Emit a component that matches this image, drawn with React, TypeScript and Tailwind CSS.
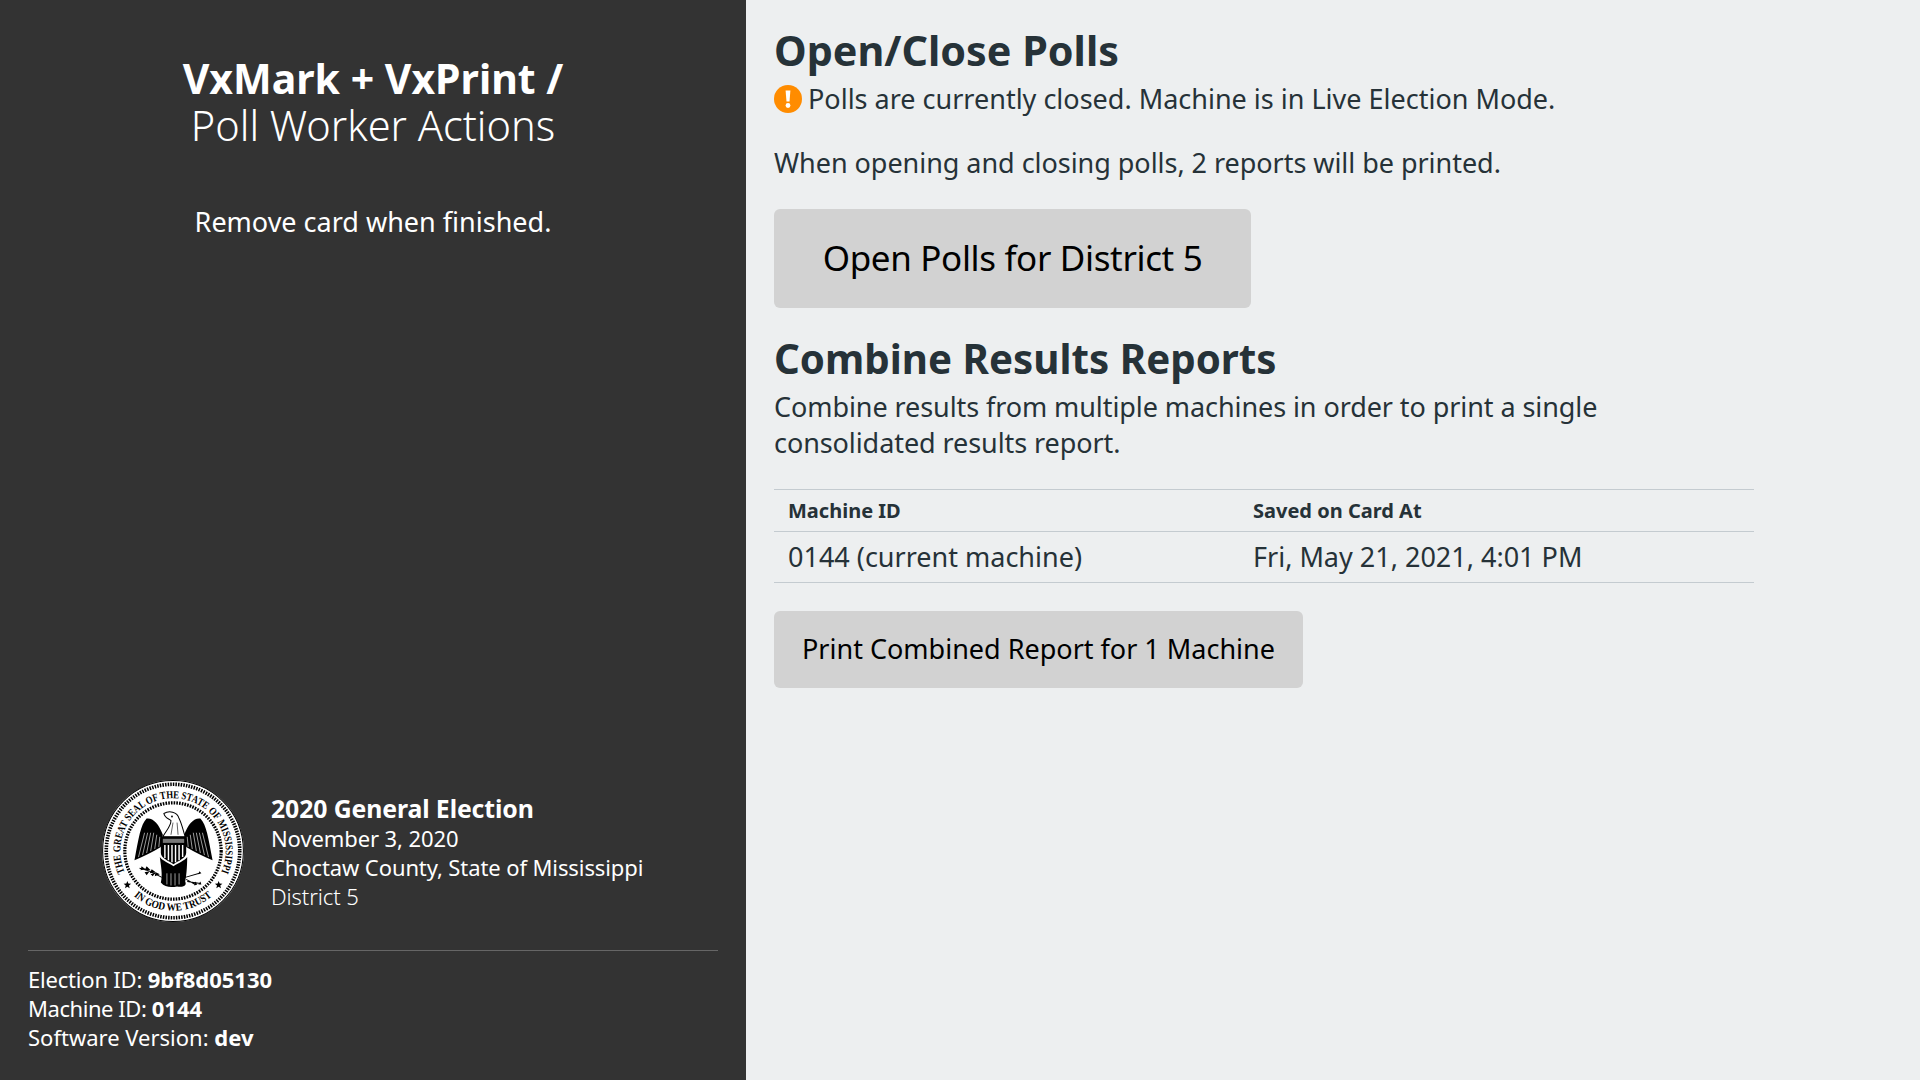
function Seal() {
  return (
    <svg viewBox="0 0 140 140" className="w-[142px] h-[142px] shrink-0">
      <circle cx="70" cy="70" r="70" fill="#fff" />
      <circle cx="70" cy="70" r="69.4" fill="none" stroke="#000" strokeWidth="1" />
      <circle cx="70" cy="70" r="65.8" fill="none" stroke="#000" strokeWidth="3.6" strokeDasharray="1.5 1.1" />
      <circle cx="70" cy="70" r="47.5" fill="none" stroke="#000" strokeWidth="3.2" strokeDasharray="1.6 1.1" />
      <defs>
        <path id="sealTop" d="M 22.9 92 A 52 52 0 1 1 117.1 92" />
        <path id="sealBottom" d="M 25 108 A 59 59 0 0 0 115 108" />
      </defs>
      <text fontFamily="'Liberation Serif', serif" fontSize="10.5" fontWeight="700" fill="#000">
        <textPath href="#sealTop" textLength="206" lengthAdjust="spacingAndGlyphs" startOffset="1">THE GREAT SEAL OF THE STATE OF MISSISSIPPI</textPath>
      </text>
      <text fontFamily="'Liberation Serif', serif" fontSize="10.5" fontWeight="700" fill="#000">
        <textPath href="#sealBottom" textLength="84" lengthAdjust="spacingAndGlyphs" startOffset="9">IN GOD WE TRUST</textPath>
      </text>
      <path d="M25 99.5l1 2.6 2.7.2-2.1 1.7.7 2.7-2.3-1.5-2.3 1.5.7-2.7-2.1-1.7 2.7-.2zM115 99.5l1 2.6 2.7.2-2.1 1.7.7 2.7-2.3-1.5-2.3 1.5.7-2.7-2.1-1.7 2.7-.2z" fill="#000" />
      {/* wings */}
      <path d="M60 54 C56 43 50 37 44 38 C38 44 36 58 32 79 C40 76 50 71 58 66 Z" fill="#000" />
      <path d="M81 54 C85 43 91 37 97 38 C103 44 105 58 109 79 C101 76 91 71 83 66 Z" fill="#000" />
      <path d="M42 52 L36 76 M45 52 L40 74 M48 52 L44 72 M51 52 L48 70 M54 54 L52 68 M57 56 L56 66 M99 52 L105 76 M96 52 L101 74 M93 52 L97 72 M90 52 L93 70 M87 54 L89 68 M84 56 L85 66" stroke="#fff" strokeWidth="0.6" fill="none" />
      {/* head */}
      <path d="M61 33 C66 30 74 31 76 38 C79 44 80 50 82 56 L60 56 C63 50 68 46 68 40 C66 38 62 38 61 33 Z" fill="#fff" stroke="#000" strokeWidth="1" />
      <path d="M70 42 L68 54 M74 42 L75 54" stroke="#000" strokeWidth="0.6" />
      <circle cx="69" cy="36" r="0.9" fill="#000" />
      {/* shield */}
      <path d="M58 56 H83 V72 C83 77 75 80 70.5 83 C66 80 58 77 58 72 Z" fill="#000" />
      <path d="M60 58 H81 V62 H60 Z" fill="#777" />
      <path d="M62 64 V77 M65.5 64 V79 M69 64 V81 M72.5 64 V81 M76 64 V79 M79.5 64 V76" stroke="#fff" strokeWidth="1.4" />
      {/* body and tail */}
      <path d="M57 76 C60 80 66 82 70.5 85 C75 82 81 80 84 76 C84 86 83 96 82 100 C84 104 80 106 74 105 C68 106 62 106 58 101 C60 94 58 84 57 76 Z" fill="#000" />
      <path d="M64 92 V103 M68 92 V104 M72 92 V104 M76 92 V103" stroke="#fff" strokeWidth="0.6" />
      {/* olive branch */}
      <path d="M37 87 C44 88 52 92 59 96" stroke="#000" strokeWidth="1.1" fill="none" />
      <path d="M39 85l4 3-5 1zM44 85l4 4-6 0zM49 88l4 3-6 1zM42 91l5-1-3 4zM48 93l5-2-3 4zM53 91l4 2-5 2z" fill="#000" />
      {/* arrows */}
      <path d="M82 96 L96 92 M84 100 L97 102 M83 98 L92 103" stroke="#000" strokeWidth="1" fill="none" />
      <path d="M96 90 l2 2 -3 1zM97 100 l1 3 -3 0zM92 100 l2 3 -3 1z" fill="#000" />
    </svg>
  );
}

export default function App() {
  return (
    <div className="flex h-screen w-full font-['Noto_Sans',sans-serif] text-[#263238] bg-[#edeff0] overflow-hidden">
      <aside className="w-[746px] shrink-0 bg-[#333333] text-white flex flex-col px-7 pb-[28px]">
        <h1 className="mt-[55px] text-center leading-[47px]">
          <span className="block text-[41px] font-bold">VxMark + VxPrint /</span>
          <span className="block text-[41.5px] font-light">Poll Worker Actions</span>
        </h1>
        <p className="mt-[55px] text-center text-[27px] leading-[36px]">Remove card when finished.</p>
        <div className="flex-1" />
        <div className="flex items-center gap-[27px] pl-[74px]">
          <Seal />
          <div className="text-[22px] leading-[29px] tracking-[-0.1px]">
            <div className="text-[24.8px] leading-[32px] font-bold">2020 General Election</div>
            <div>November 3, 2020</div>
            <div>Choctaw County, State of Mississippi</div>
            <div className="font-light">District 5</div>
          </div>
        </div>
        <div className="mt-[28px] border-t border-[#666666] pt-[14px] text-[22px] leading-[29px]">
          <div><span className="tracking-[-0.2px]">Election ID: </span><strong className="font-bold">9bf8d05130</strong></div>
          <div><span className="tracking-[-0.44px]">Machine ID: </span><strong className="font-bold">0144</strong></div>
          <div>Software Version: <strong className="font-bold">dev</strong></div>
        </div>
      </aside>
      <main className="flex-1 px-7">
        <h2 className="mt-[24px] text-[41.3px] leading-[52px] font-bold">Open/Close Polls</h2>
        <p className="flex items-center gap-[6px] text-[27px] leading-[36px] mt-[5px]">
          <svg viewBox="0 0 28 28" className="w-[28px] h-[28px] shrink-0">
            <circle cx="14" cy="14" r="14" fill="#ff8c00" />
            <path d="M11.6 5.5 h4.8 L15.5 16.5 h-3 Z" fill="#fff" />
            <circle cx="14" cy="20.5" r="2.4" fill="#fff" />
          </svg>
          Polls are currently closed. Machine is in Live Election Mode.
        </p>
        <p className="mt-[28px] text-[27px] leading-[36px] tracking-[-0.04px]">When opening and closing polls, 2 reports will be printed.</p>
        <button className="mt-[28px] block w-[477px] h-[99px] rounded-md bg-[#d2d2d2] text-black text-[35px] tracking-[-0.01em] text-center">Open Polls for District 5</button>
        <h2 className="mt-[25px] text-[40.3px] leading-[52px] font-bold">Combine Results Reports</h2>
        <p className="mt-[4px] w-[900px] text-[27px] leading-[36px] tracking-[-0.08px]">Combine results from multiple machines in order to print a single consolidated results report.</p>
        <table className="mt-[28px] w-[980px] table-fixed border-collapse">
          <thead>
            <tr className="border-y border-[#c4cbd0] text-[20px] font-bold">
              <th className="w-[465px] h-[42px] px-[14px] text-left">Machine ID</th>
              <th className="px-[14px] text-left">Saved on Card At</th>
            </tr>
          </thead>
          <tbody>
            <tr className="border-b border-[#c4cbd0] text-[27px]">
              <td className="h-[51px] px-[14px]">0144 (current machine)</td>
              <td className="px-[14px]">Fri, May 21, 2021, 4:01 PM</td>
            </tr>
          </tbody>
        </table>
        <button className="mt-[28px] block w-[529px] h-[77px] rounded-md bg-[#d2d2d2] text-black text-[27px] text-center">Print Combined Report for 1 Machine</button>
      </main>
    </div>
  );
}
